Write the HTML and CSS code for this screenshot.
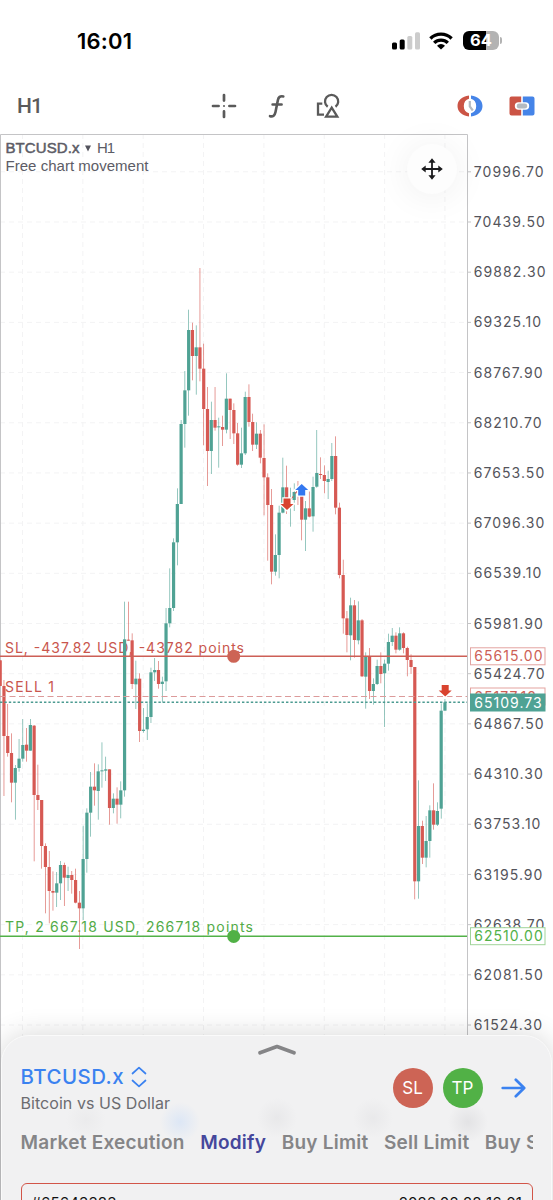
FILE: index.html
```
<!DOCTYPE html>
<html lang="en">
<head>
    <meta charset="UTF-8">
    <meta name="viewport" content="width=device-width, initial-scale=1.0">
    <title>BTCUSD.x H1</title>
    <link rel="stylesheet" href="styles.css">
</head>
<body>
    <div class="phone">
        <header class="status-bar">
            <span class="clock">16:01</span>
            <div class="status-icons">
                <svg class="signal" width="28" height="18" viewBox="0 0 28 18">
                    <rect x="0" y="10.5" width="5" height="7" rx="1.5" fill="#000"/>
                    <rect x="7.7" y="7.5" width="5" height="10" rx="1.5" fill="#000"/>
                    <rect x="15.3" y="4" width="5" height="13.5" rx="1.5" fill="#ccc"/>
                    <rect x="23" y="0.2" width="5" height="17.3" rx="1.5" fill="#ccc"/>
                </svg>
                <svg class="wifi" width="24" height="18" viewBox="0 0 24 18">
                    <g fill="none" stroke="#000" stroke-width="3.4">
                        <path d="M1.4 6.4a15.4 15.4 0 0 1 21.2 0"/>
                        <path d="M5.2 10.9a9.8 9.8 0 0 1 13.6 0"/>
                    </g>
                    <path d="M12 17.6 8 13.7a5.8 5.8 0 0 1 8 0z" fill="#000"/>
                </svg>
                <div class="battery"><span>64</span></div>
            </div>
        </header>

        <nav class="toolbar">
            <button class="timeframe">H1</button>
            <div class="tools">
                <svg width="26" height="26" viewBox="0 0 26 26" fill="none" stroke="#5a5a5a" stroke-width="2.7" stroke-linecap="round">
                    <path d="M13 2v5.600M13 18.400V24M2 13h5.600M18.400 13H24"/>
                    <path d="M13 13h.01" stroke-width="2"/>
                </svg>
                <svg width="18" height="26" viewBox="0 0 18 26" fill="none" stroke="#5a5a5a" stroke-width="2.6" stroke-linecap="round">
                    <path d="M15.300 3.400c-3.200-.8-4.800.8-5.400 3.600L7.500 19c-.7 3.400-2.500 5-5.500 4.200M4.600 11.500h9"/>
                </svg>
                <svg width="24" height="26" viewBox="0 0 24 26" fill="none" stroke="#5a5a5a" stroke-width="2.3">
                    <path d="M6.300 10.700H2v11h6"/>
                    <path d="M11.700 13.800a6.600 6.600 0 1 1 7.800 0"/>
                    <path d="M15.700 14.700 21.300 23.700H10.100z"/>
                </svg>
            </div>
            <div class="trade-tools">
                <svg width="26" height="22" viewBox="0 0 26 22">
                    <path d="M12 .5v3.200C8.600 4.500 6.800 7.200 6.800 11s1.800 6.500 5.200 7.300v3.200C5 20.700.5 16.700.5 11S5 1.300 12 .5z" fill="#cb5445"/>
                    <path d="M14 .5v3.200c3.400.8 5.200 3.500 5.200 7.300s-1.800 6.500-5.200 7.300v3.200c7-.8 11.500-4.800 11.500-10.500S21 1.300 14 .5z" fill="#4584e8"/>
                    <path d="M12.800 6v5.500l3 4" fill="none" stroke="#b4bac0" stroke-width="2.200"/>
                </svg>
                <svg width="26" height="20" viewBox="0 0 26 20">
                    <path d="M2.500.5h9.700v5.800H9.500a3.700 3.700 0 0 0 0 7.400h2.700v5.800H2.500a2 2 0 0 1-2-2v-15a2 2 0 0 1 2-2z" fill="#cb5445"/>
                    <path d="M13.800.5h9.700a2 2 0 0 1 2 2v15a2 2 0 0 1-2 2h-9.700v-5.800h2.700a3.700 3.700 0 0 0 0-7.400h-2.700z" fill="#4584e8"/>
                    <rect x="7.800" y="7.400" width="10.400" height="5.200" rx="2.400" fill="#b4bac0"/>
                </svg>
            </div>
        </nav>

        <main class="chart">
            <svg id="plot" width="553" height="1066" viewBox="0 134 553 1066"></svg>
            <button class="move-btn">
                <svg width="24" height="24" viewBox="0 0 24 24">
                    <path d="M12 3v18M3 12h18" stroke="#1c1c1e" stroke-width="1.800"/>
                    <path d="M12 1.200l3.600 4.500H8.400zM12 22.800l3.600-4.500H8.400zM1.200 12l4.500-3.600v7.200zM22.800 12l-4.500-3.600v7.200z" fill="#1c1c1e"/>
                </svg>
            </button>
        </main>

        <section class="sheet">
            <svg class="handle" width="38" height="11" viewBox="0 0 38 11" fill="none" stroke="#858587" stroke-width="3.600" stroke-linecap="round" stroke-linejoin="round">
                <path d="M2 8.800 19 2.500l17 6.300"/>
            </svg>
            <div class="sheet-head">
                <div class="instrument">
                    <div class="symbol">
                        <span>BTCUSD.x</span>
                        <svg width="16" height="22" viewBox="0 0 16 22" fill="none" stroke="#3b82f0" stroke-width="1.700" stroke-linecap="round" stroke-linejoin="round">
                            <path d="M1.500 7.500 8 1.700l6.500 5.800M1.500 14.500 8 20.300l6.500-5.800"/>
                        </svg>
                    </div>
                    <p>Bitcoin vs US Dollar</p>
                </div>
                <div class="actions">
                    <button class="round sl">SL</button>
                    <button class="round tp">TP</button>
                    <svg class="arrow" width="25" height="20" viewBox="0 0 25 20" fill="none" stroke="#3b82f0" stroke-width="2.700" stroke-linecap="round" stroke-linejoin="round">
                        <path d="M1.700 10h21.300M14.800 1.700 23.200 10l-8.400 8.300"/>
                    </svg>
                </div>
            </div>
            <div class="tabs">
                <span>Market Execution</span>
                <span class="active">Modify</span>
                <span>Buy Limit</span>
                <span>Sell Limit</span>
                <span>Buy Stop</span>
            </div>
            <div class="position">
                <span>#65643383</span>
                <span>2026.02.28 16:01</span>
            </div>
        </section>
    </div>
    <script src="chart.js"></script>
</body>
</html>
```
FILE: styles.css
```
* {
    box-sizing: border-box;
}

body {
    margin: 0;
    background: #fff;
    font-family: Inter, "Liberation Sans", sans-serif;
}

button {
    border: none;
    background: none;
    padding: 0;
    font-family: inherit;
}

svg {
    display: block;
    flex-shrink: 0;
}

.phone {
    position: relative;
    width: 553px;
    height: 1200px;
    overflow: hidden;
}

/* Status bar */
.status-bar {
    display: flex;
    justify-content: space-between;
    align-items: center;
    height: 82px;
    padding: 0 50px 0 77px;
}

.clock {
    font-size: 22px;
    font-weight: 600;
    letter-spacing: 0.2px;
}

.status-icons {
    display: flex;
    align-items: center;
    gap: 9px;
    margin-top: -1px;
}

.battery {
    position: relative;
    width: 36px;
    height: 19px;
    margin: 0 4px 0 1px;
    border-radius: 6px;
    background: linear-gradient(90deg, #000 64%, #b3b3b3 64%);
    color: #fff;
    font-size: 16.5px;
    font-weight: 700;
    line-height: 19px;
    text-align: center;
}

.battery::after {
    content: "";
    position: absolute;
    right: -3px;
    top: 6px;
    width: 2px;
    height: 7px;
    border-radius: 0 2px 2px 0;
    background: #b3b3b3;
}

/* Toolbar */
.toolbar {
    display: flex;
    align-items: center;
    height: 52px;
    padding: 0 18px 5px 17px;
}

.timeframe {
    width: 194px;
    text-align: left;
    font-family: Roboto, sans-serif;
    font-size: 21px;
    font-weight: 500;
    letter-spacing: -1px;
    color: #5a5a5a;
}

.tools,
.trade-tools {
    display: flex;
    align-items: center;
}

.tools {
    gap: 30.5px;
}

.trade-tools {
    gap: 26px;
    margin-left: auto;
}

/* Chart */
.chart {
    position: relative;
}

.grid {
    stroke: #f3f3f4;
    stroke-width: 1;
    stroke-dasharray: 5 4;
}

.frame {
    fill: none;
    stroke: #c4c4c6;
}

.chart text {
    font-size: 14px;
}

.axis-label {
    fill: #54545b;
}

.up {
    fill: #4fa294;
}

.down {
    fill: #d65953;
}

.level-sl {
    fill: #c9564d;
}

.level-tp {
    fill: #52ab47;
}

.chart .title {
    font-family: "Liberation Sans", sans-serif;
    font-size: 15px;
    fill: #5c5c66;
}

.chart .bold {
    stroke: #5c5c66;
    stroke-width: 0.5px;
}

.move-btn {
    position: absolute;
    left: 407px;
    top: 9.5px;
    display: flex;
    align-items: center;
    justify-content: center;
    width: 50px;
    height: 50px;
    border-radius: 50%;
    background: #fdfdfd;
    box-shadow: 0 2px 36px rgba(0, 0, 0, 0.07);
}

/* Bottom sheet */
.sheet {
    position: absolute;
    left: 1px;
    right: 1px;
    top: 1035px;
    height: 200px;
    border: 1.5px solid #fafafa;
    border-radius: 28px 28px 0 0;
    padding: 8px 18px 0 18.5px;
    background:
        radial-gradient(circle at 178px 86px, rgba(190, 215, 250, 0.4), transparent 20px),
        radial-gradient(circle at 84px 84px, rgba(200, 200, 204, 0.15), transparent 20px),
        radial-gradient(circle at 275px 82px, rgba(200, 200, 204, 0.22), transparent 20px),
        radial-gradient(circle at 371px 82px, rgba(200, 200, 204, 0.2), transparent 20px),
        radial-gradient(circle at 466px 86px, rgba(200, 200, 204, 0.35), transparent 20px),
        #f1f1f2;
    box-shadow: 0 0 28px rgba(0, 0, 0, 0.16);
}

.handle {
    margin: 0 auto;
}

.sheet-head {
    display: flex;
    justify-content: space-between;
    height: 76px;
}

.symbol {
    display: flex;
    align-items: center;
    gap: 6.5px;
    height: 26px;
    margin-top: 8.5px;
    color: #3b82f0;
    font-size: 20.4px;
    font-weight: 500;
    letter-spacing: 0.5px;
}

.instrument p {
    margin: 3.5px 0 0;
    color: #6c6c70;
    font-size: 16px;
    line-height: 20px;
    letter-spacing: 0.05px;
}

.actions {
    display: flex;
    align-items: center;
    height: 40px;
    margin: 13px 7.5px 0 0;
}

.round {
    width: 40px;
    height: 40px;
    margin-right: 10px;
    border-radius: 50%;
    color: #fff;
    font-size: 17px;
}

.sl {
    background: #cd6455;
}

.tp {
    background: #51b146;
}

.arrow {
    margin-left: 8px;
}

.tabs {
    display: flex;
    gap: 15.5px;
    overflow: hidden;
    white-space: nowrap;
    color: #858587;
    font-size: 19px;
    font-weight: 600;
    line-height: 24px;
    letter-spacing: 0.25px;
}

.tabs .active {
    color: #45479c;
}

.position {
    display: flex;
    justify-content: space-between;
    height: 60px;
    margin-top: 28px;
    padding: 9px 10px 0;
    border: 1.5px solid #d25549;
    border-radius: 6px;
    color: #111;
    font-size: 15px;
    line-height: 20px;
    letter-spacing: 0.12px;
}
```
FILE: chart.js
```
const plot = document.getElementById('plot');
const NS = 'http://www.w3.org/2000/svg';

function add(tag, attrs, text) {
    const el = document.createElementNS(NS, tag);
    for (const key in attrs) {
        el.setAttribute(key, attrs[key]);
    }
    if (text) el.textContent = text;
    plot.appendChild(el);
    return el;
}

// Bars in thirds of a pixel below the block's base: [high, top, bottom, low, up]
const blocks = [
    { base: 590, bars: [
        [211,211,288,288,0],[270,288,438,618,0],[342,438,489,500,0],[430,489,578,637,0],[525,534,578,689,1],
        [447,506,534,545,1],[387,465,506,515,1],[414,464,482,515,0],[387,405,482,482,1],[405,407,615,814,0],
        [524,615,630,660,0],[630,630,768,836,0],[760,768,831,970,0],[783,831,903,1000,0],[844,903,908,962,0],
        [846,880,908,951,1],[813,825,880,930,1],[818,825,863,948,0],[830,855,864,903,1],[843,855,870,911,0],
        [836,870,938,940,0],[903,938,955,1077,0],[707,807,955,990,1],[655,668,807,848,1],[546,590,668,740,1],
        [520,590,601,647,0],[523,544,603,689,1],[457,541,544,593,1],[500,538,542,573,1],[538,538,654,704,0],
        [610,626,654,670,1],[592,626,644,701,0],[574,601,644,685,1],[35,148,601,620,1],[35,149,152,152,0],
        [130,151,282,297,0],[212,266,283,357,1],[250,266,423,456,0],[354,419,423,428,1],[340,381,418,450,1],
        [233,247,381,399,1],[204,240,247,273,1],[213,240,282,296,0],[260,275,282,338,1],[54,100,274,303,1],
        [-65,54,100,112,1]
    ]},
    { base: 260, bars: [
        [835,847,1044,1053,1],[685,732,847,916,1],[480,492,732,732,1],[333,391,492,563,1],[149,210,391,467,1],
        [188,210,288,361,0],[196,262,288,404,1],[24,262,326,364,0],[251,326,447,556,0],[381,447,573,678,0],
        [425,480,573,642,1],[381,480,503,512,0],[473,499,502,623,1],[467,501,509,558,0],[340,416,509,520,1],
        [416,416,450,537,0],[430,450,520,552,0],[489,520,614,617,0],[503,580,614,624,1],[395,411,580,585,1],
        [373,411,486,500,0],[461,486,554,573,0],[487,521,554,567,1],[510,521,593,610,0],[493,594,652,766,0],
        [640,652,735,902,0],[687,735,935,973,0],[823,885,935,947,1],[737,758,885,955,1],[593,682,758,760,1],
        [617,682,740,762,0],[683,735,740,800,1],[670,696,720,753,1],[663,692,700,735,0],[690,700,779,841,0],
        [723,745,779,873,1],[694,745,770,772,0]
    ]},
    { base: 400, bars: [
        [230,261,349,395,1],[90,219,260,263,1],[172,222,225,237,0],[196,225,243,280,0],[212,237,246,297,1],
        [129,168,237,243,1],[109,168,323,343,0],[308,323,525,535,0],[479,525,655,701,0],[633,655,705,757,0],
        [593,616,706,781,1],[600,616,720,773,0],[604,661,721,733,1],[657,661,829,831,0],[757,769,830,926,1],
        [744,769,873,897,0],[835,852,873,914,1],[779,798,852,855,1],[757,798,822,850,0],[779,791,820,981,1],
        [701,726,791,812,1],[684,707,726,738,1],[697,707,749,760,0],[682,700,749,752,1],[697,700,744,760,0],
        [740,744,780,829,0],[763,780,801,822,0]
    ]},
    { base: 600, bars: [
        [201,201,844,898,0],[541,678,844,896,1],[662,678,773,792,0],[648,723,773,802,1],[616,631,723,773,1],
        [550,631,674,689,0],[607,633,674,678,1],[310,332,626,656,1],[297,307,332,332,1]
    ]}
];

const prices = ['70996.70', '70439.50', '69882.30', '69325.10', '68767.90', '68210.70', '67653.50', '67096.30', '66539.10',
    '65981.90', '65424.70', '64867.50', '64310.30', '63753.10', '63195.90', '62638.70', '62081.50', '61524.30'];

// Grid and price scale
for (let x = 22.5; x < 467; x += 60.35) {
    add('line', { class: 'grid', x1: x, x2: x, y1: 134, y2: 1200 });
}
prices.forEach((price, i) => {
    const y = 171.8 + i * 50.19;
    add('line', { class: 'grid', x1: 0, x2: 467, y1: y, y2: y });
    add('line', { class: 'frame', x1: 467, x2: 471, y1: y, y2: y });
    add('text', { class: 'axis-label', x: 473.8, y: y + 5.1, 'letter-spacing': 1.05 }, price);
});
add('path', { class: 'frame', d: 'M0.5 1200V134.500H467.500V1200' });

// Level captions lie under the bars
add('text', { class: 'level-sl', x: 5, y: 652.5, textLength: 239 }, 'SL, -437.82 USD, -43782 points');
add('text', { class: 'level-sl', x: 5, y: 692.3, textLength: 49 }, 'SELL 1');
add('text', { class: 'level-tp', x: 5, y: 932.3, textLength: 248 }, 'TP, 2 667.18 USD, 266718 points');

let index = 0;
blocks.forEach(({ base, bars }) => {
    bars.forEach(([high, top, bottom, low, up]) => {
        const x = 0.2 + index * 3.769;
        const cls = up ? 'up' : 'down';
        add('rect', { class: cls, x: x - 0.3, y: base + high / 3, width: 0.6, height: (low - high) / 3 });
        add('rect', { class: cls, x: x - 1.6, y: base + top / 3, width: 3.2, height: Math.max((bottom - top) / 3, 1) });
        index++;
    });
});

// Stop loss, entry, bid and take profit lines
add('line', { x1: 0, x2: 467, y1: 656.3, y2: 656.3, stroke: '#cd5f56', 'stroke-width': 1.4 });
add('line', { x1: 0, x2: 467, y1: 696.5, y2: 696.5, stroke: '#dc9a9a', 'stroke-width': 1, 'stroke-dasharray': '6 3.5' });
add('line', { x1: 0, x2: 467, y1: 702.3, y2: 702.3, stroke: '#4c9b91', 'stroke-width': 1.4, 'stroke-dasharray': '2.4 2' });
add('line', { x1: 0, x2: 467, y1: 936.2, y2: 936.2, stroke: '#52b148', 'stroke-width': 1.4 });
add('circle', { cx: 233.7, cy: 656.3, r: 6.5, fill: '#cd6455' });
add('circle', { cx: 233.7, cy: 936.4, r: 6.5, fill: '#51b146' });

// Deal markers
function arrow(x, y, dir, color) {
    const d = `M${x} ${y + 6 * dir}l-6.500 ${-6 * dir}h3v${-5.5 * dir}h7v${5.5 * dir}h3z`;
    add('path', { d, fill: color, stroke: '#fff', 'stroke-width': 2.5, 'paint-order': 'stroke' });
}
add('line', { x1: 287, x2: 302, y1: 505, y2: 484, stroke: '#d65953', 'stroke-dasharray': '4 3' });
arrow(287, 504, 1, '#d9432f');
arrow(301.7, 490, -1, '#3478f0');
arrow(445.2, 690.5, 1, '#d9432f');

// Price tags
function tag(y, price, stroke, fill, color) {
    add('rect', { x: 470.5, y: y - 8.5, width: 74.5, height: 17, fill, stroke });
    add('text', { x: 474.2, y: y + 5.1, fill: color, 'letter-spacing': 1.05 }, price);
}
tag(656.3, '65615.00', '#e3a3a0', '#fff', '#cd5f56');
tag(696.5, '65177.18', '#e3a3a0', '#fff', '#cd5f56');
tag(702.5, '65109.73', '#4fa294', '#4fa294', '#fff');
tag(936.2, '62510.00', '#a0d49a', '#fff', '#52b148');

// Chart heading
add('text', { class: 'title bold', x: 5.5, y: 152.5, textLength: 74 }, 'BTCUSD.x');
add('path', { d: 'M85 145.500h6l-3 6z', fill: '#53535d' });
add('text', { class: 'title', x: 97, y: 152.5, textLength: 18 }, 'H1');
add('text', { class: 'title', x: 5.5, y: 170.500, textLength: 143 }, 'Free chart movement');
```
